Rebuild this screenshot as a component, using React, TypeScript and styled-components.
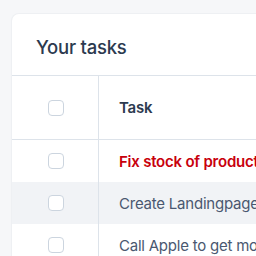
import React from 'react'
import styled, { createGlobalStyle } from 'styled-components'

const GlobalStyle = createGlobalStyle`
  html, body {
    margin: 0;
    padding: 0;
    background: #f6f7f9;
    font-family: Inter, 'Noto Sans', sans-serif;
    letter-spacing: -0.014em;
    overflow: hidden;
  }
`

const Page = styled.main`
  padding: 14px 0 0 12px;
  width: 256px;
  height: 256px;
  box-sizing: border-box;
  overflow: hidden;
`

const Card = styled.section`
  width: 400px;
  background: #fff;
  border-radius: 7px;
  box-shadow: 0 0 0 1px #eef0f3, 0 1px 3px rgba(30, 40, 60, 0.05);
`

const Title = styled.h2`
  margin: 0;
  height: 62px;
  padding: 4px 24px 0;
  box-sizing: border-box;
  display: flex;
  align-items: center;
  font-size: 18.5px;
  font-weight: 500;
  color: #2c3a4f;
  border-bottom: 1px solid #dde3ea;
`

const Table = styled.div`
  display: flex;
  flex-flow: column nowrap;
`

const Row = styled.div<{ $head?: boolean; $shade?: boolean }>`
  display: grid;
  grid-template-columns: 87px 1fr;
  height: ${(p) => (p.$head ? '63px' : '42px')};
  background: ${(p) => (p.$shade ? '#f1f3f6' : '#fff')};
  border-bottom: ${(p) => (p.$head ? '1px solid #dde3ea' : 'none')};
`

const CheckCell = styled.div`
  display: flex;
  align-items: center;
  justify-content: center;
  border-right: 1px solid #dde3ea;
`

const Box = styled.span`
  width: 14px;
  height: 14px;
  border: 1px solid #ccd5df;
  border-radius: 4px;
  background: #fff;
  margin-left: 1px;
`

const TextCell = styled.div<{ $head?: boolean; $urgent?: boolean }>`
  display: flex;
  align-items: center;
  padding-left: 20px;
  white-space: nowrap;
  overflow: hidden;
  font-size: 15px;
  font-weight: ${(p) => (p.$head || p.$urgent ? 600 : 400)};
  color: ${(p) => (p.$urgent ? '#c8000c' : p.$head ? '#2c3a4f' : '#4a5870')};
`

const tasks = [
  { name: 'Fix stock of products', urgent: true },
  { name: 'Create Landingpage for product', urgent: false },
  { name: 'Call Apple to get more info', urgent: false },
]

export default function App() {
  return (
    <Page>
      <GlobalStyle />
      <Card>
        <Title>Your tasks</Title>
        <Table>
          <Row $head>
            <CheckCell>
              <Box />
            </CheckCell>
            <TextCell $head>Task</TextCell>
          </Row>
          {tasks.map((t, i) => (
            <Row key={t.name} $shade={i % 2 === 1}>
              <CheckCell>
                <Box />
              </CheckCell>
              <TextCell $urgent={t.urgent}>{t.name}</TextCell>
            </Row>
          ))}
        </Table>
      </Card>
    </Page>
  )
}
